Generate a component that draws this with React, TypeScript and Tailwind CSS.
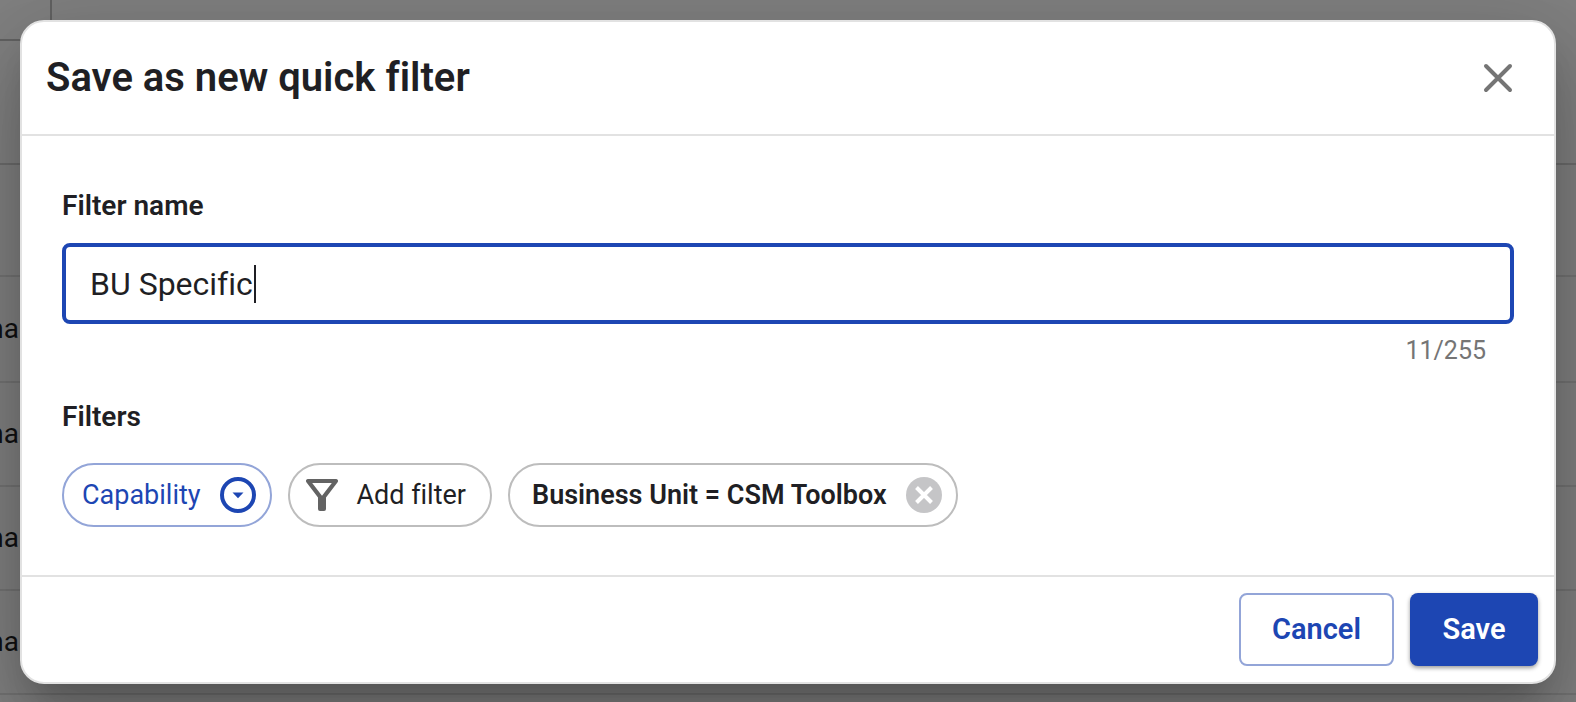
import { useState } from 'react';
import type { ReactNode } from 'react';

const MAX_LENGTH = 255;

// table behind the dialog, only its edges stay visible
const ROWS = [1, 2, 3, 4];

function Backdrop() {
  return (
    <div aria-hidden="true" className="absolute inset-0 overflow-hidden bg-[#808080]">
      <div className="flex h-[41px] w-[52px] border-r-2 border-b-2 border-[#626262]" />
      <div className="h-[124px] border-b-2 border-[#6c6c6c]" />
      <div className="h-28 border-b-2 border-[#737373]" />
      <div>
        {ROWS.map((row) => (
          <div key={row} className="flex h-[104px] items-center border-b-2 border-[#737373] first:h-[106px]">
            <div className="flex w-[19px] justify-end text-[28px] text-[#101012]">na</div>
          </div>
        ))}
      </div>
    </div>
  );
}

function Chip({ className, children }: { className: string; children: ReactNode }) {
  return (
    <button
      type="button"
      className={`flex h-16 items-center justify-between rounded-full border-2 text-[27px] leading-8 whitespace-nowrap ${className}`}
    >
      {children}
    </button>
  );
}

export default function App() {
  const [name, setName] = useState('BU Specific');

  return (
    <div className="relative min-h-screen overflow-hidden font-['Roboto',sans-serif] text-[#1f1f24] [font-variant-ligatures:none]">
      <Backdrop />
      <div className="relative px-5 pt-5 pb-[18px]">
        <div
          role="dialog"
          aria-labelledby="dialog-title"
          className="rounded-3xl border-2 border-[#e2e2e2] bg-white shadow-[0_22px_30px_-14px_rgba(0,0,0,0.2),0_48px_76px_6px_rgba(0,0,0,0.14),0_18px_92px_16px_rgba(0,0,0,0.12)]"
        >
          <header className="flex h-[114px] items-center justify-between border-b-2 border-[#e2e2e2] pr-10 pl-6">
            <h2 id="dialog-title" className="text-[40px] leading-[48px] font-semibold">
              Save as new quick filter
            </h2>
            <button type="button" aria-label="Close" className="text-[#757575]">
              <svg
                width="32"
                height="32"
                viewBox="0 0 32 32"
                fill="none"
                stroke="currentColor"
                strokeWidth="4"
                strokeLinecap="round"
              >
                <path d="M4 4l24 24M28 4L4 28" />
              </svg>
            </button>
          </header>

          <div className="px-10 pt-[52px] pb-12">
            <label htmlFor="filter-name" className="block text-[28px] leading-9 font-semibold">
              Filter name
            </label>
            <div className="relative mt-[19px]">
              <input
                id="filter-name"
                value={name}
                maxLength={MAX_LENGTH}
                onChange={(e) => setName(e.target.value)}
                className="block h-[81px] w-full rounded-lg border-4 border-[#1d46b3] px-6 text-[32px] outline-none"
              />
              <span className="absolute top-[22px] left-[192px] h-[38px] w-[2px] bg-[#1f1f24]" />
            </div>
            <p className="mt-2 pr-7 text-right text-[25px] leading-[38px] text-[#757575]">
              {name.length}/{MAX_LENGTH}
            </p>

            <h3 className="mt-[29px] text-[28px] leading-9 font-semibold">Filters</h3>
            <div className="mt-7 flex flex-wrap gap-4">
              <Chip className="min-w-[210px] gap-4 border-[#93a5d8] pr-[14px] pl-[18px] text-[#1d46b3]">
                Capability
                <svg width="36" height="36" viewBox="0 0 36 36">
                  <circle cx="18" cy="18" r="16" fill="none" stroke="currentColor" strokeWidth="4" />
                  <path d="M12.5 15.5h11L18 21.2z" fill="currentColor" />
                </svg>
              </Chip>
              <Chip className="min-w-[204px] gap-4 border-[#bdbdbd] pr-6 pl-4">
                <svg width="32" height="32" viewBox="0 0 32 32" className="text-[#636363]">
                  <path
                    d="M2 0h28a2 2 0 0 1 1.6 3.2L20 18.5V30a2 2 0 0 1-2 2h-4a2 2 0 0 1-2-2V18.5L.4 3.2A2 2 0 0 1 2 0zM6.2 4L16 16.8 25.8 4z"
                    fill="currentColor"
                    fillRule="evenodd"
                  />
                </svg>
                Add filter
              </Chip>
              <Chip className="min-w-[450px] gap-3 border-[#bdbdbd] pr-[14px] pl-[22px] font-semibold">
                Business Unit = CSM Toolbox
                <svg width="36" height="36" viewBox="0 0 36 36">
                  <circle cx="18" cy="18" r="18" fill="#c5c5c7" />
                  <path d="M10.5 10.5l15 15M25.5 10.5l-15 15" stroke="#fff" strokeWidth="4" />
                </svg>
              </Chip>
            </div>
          </div>

          <footer className="flex justify-end gap-4 border-t-2 border-[#e2e2e2] p-4">
            <button
              type="button"
              className="h-[73px] min-w-[155px] rounded-lg border-2 border-[#93a5d8] px-7 text-[29px] font-semibold text-[#1d46b3]"
            >
              Cancel
            </button>
            <button
              type="button"
              className="h-[73px] min-w-32 rounded-lg bg-[#1d46b3] px-7 text-[29px] font-semibold text-white shadow-[0_2px_4px_rgba(0,0,0,0.4)]"
            >
              Save
            </button>
          </footer>
        </div>
      </div>
    </div>
  );
}
